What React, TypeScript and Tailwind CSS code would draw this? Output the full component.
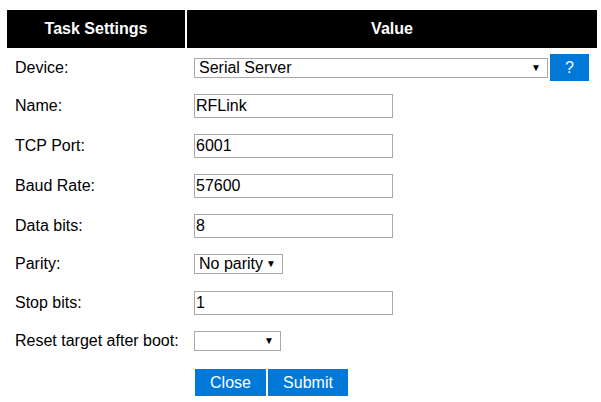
import React from 'react';

const FONT = { fontFamily: '"Liberation Sans", Arial, sans-serif' };

function Select({ value, width, height = 'h-[20px]' }: { value: string; width: string; height?: string }) {
  return (
    <div className={`${width} ${height} flex items-center justify-between border border-[#a9a9a9] bg-white pl-[4px] pr-[6px] text-[16px] leading-none text-black`}>
      <span>{value}</span>
      <span className="text-[10px] leading-none">▼</span>
    </div>
  );
}

function TextInput({ value }: { value: string }) {
  return (
    <input
      readOnly
      value={value}
      className="h-[24px] w-[199px] border border-[#a9a9a9] bg-white px-[1px] text-[16px] leading-none text-black outline-none"
      style={FONT}
    />
  );
}

function Row({ label, h, children }: { label: string; h: string; children: React.ReactNode }) {
  return (
    <div className={`flex ${h} gap-[2px]`}>
      <div className="flex w-[178px] items-center pl-[8px] text-[16px] text-black">{label}</div>
      <div className="flex flex-1 items-center pl-[7px]">{children}</div>
    </div>
  );
}

export default function App() {
  return (
    <div className="h-[402px] w-[601px] overflow-hidden bg-white pl-[7px] pt-[10px]" style={FONT}>
      <div className="flex w-[590px] flex-col gap-[2px]">
        <div className="flex h-[38px] gap-[2px] text-[16px] font-bold text-white">
          <div className="flex w-[178px] items-center justify-center bg-black">Task Settings</div>
          <div className="flex flex-1 items-center justify-center bg-black">Value</div>
        </div>

        <Row label="Device:" h="h-[35px]">
          <Select value="Serial Server" width="w-[354px]" />
          <button className="ml-[2px] h-[27px] w-[39px] bg-[#0078d7] text-[16px] text-white">?</button>
        </Row>
        <Row label="Name:" h="h-[38px]">
          <TextInput value="RFLink" />
        </Row>
        <Row label="TCP Port:" h="h-[37px]">
          <TextInput value="6001" />
        </Row>
        <Row label="Baud Rate:" h="h-[39px]">
          <TextInput value="57600" />
        </Row>
        <Row label="Data bits:" h="h-[37px]">
          <TextInput value="8" />
        </Row>
        <Row label="Parity:" h="h-[36px]">
          <Select value="No parity" width="w-[89px]" />
        </Row>
        <Row label="Stop bits:" h="h-[37px]">
          <TextInput value="1" />
        </Row>
        <Row label="Reset target after boot:" h="h-[36px]">
          <Select value="" width="w-[87px]" />
        </Row>
        <div className="flex h-[43px] gap-[2px]">
          <div className="w-[178px]" />
          <div className="flex flex-1 items-center gap-[2px] pl-[8px]">
            <button className="h-[27px] w-[71px] bg-[#0078d7] text-[16px] text-white">Close</button>
            <button className="h-[27px] w-[80px] bg-[#0078d7] text-[16px] text-white">Submit</button>
          </div>
        </div>
      </div>
    </div>
  );
}
